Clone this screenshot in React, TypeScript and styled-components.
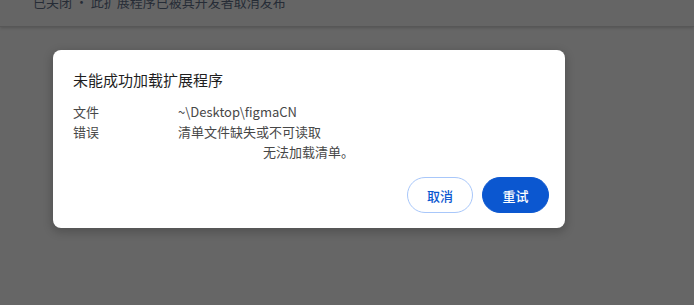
import React from "react";
import styled, { createGlobalStyle } from "styled-components";

const Global = createGlobalStyle`
  html, body { margin: 0; padding: 0; background: #666666; }
  body { font-family: "Noto Sans CJK SC", "Noto Sans", sans-serif; }
  * { box-sizing: border-box; }
`;

const Page = styled.div`
  width: 694px;
  height: 305px;
  background: #666666;
  overflow: hidden;
  display: flex;
  flex-direction: column;
`;

const TopBar = styled.div`
  height: 27px;
  flex: none;
  background: #656565;
  border-bottom: 1px solid #575757;
  box-shadow: 0 1px 3px rgba(0, 0, 0, 0.18);
  overflow: hidden;
  padding-left: 33px;
`;

const TopText = styled.div`
  margin-top: -8px;
  font-size: 13px;
  line-height: 20px;
  color: #262c36;
  white-space: nowrap;
`;

const Dialog = styled.div`
  margin: 23px 0 0 53px;
  width: 512px;
  height: 178px;
  background: #ffffff;
  border-radius: 8px;
  box-shadow: 0 3px 8px 2px rgba(0, 0, 0, 0.18);
  padding: 20px 16px 15px 20px;
  display: flex;
  flex-direction: column;
`;

const Title = styled.div`
  font-size: 15px;
  line-height: 20px;
  color: #1f1f1f;
`;

const Details = styled.div`
  margin-top: 12px;
  display: grid;
  grid-template-columns: 105px 1fr;
  font-size: 13px;
  line-height: 20px;
  color: #474747;
`;

const Label = styled.div``;
const Value = styled.div``;

const Extra = styled.div`
  grid-column: 2;
  padding-left: 85px;
`;

const Actions = styled.div`
  margin-top: auto;
  display: flex;
  justify-content: flex-end;
  gap: 9px;
`;

const Button = styled.button<{ $primary?: boolean }>`
  height: 36px;
  width: ${(p) => (p.$primary ? "67px" : "66px")};
  border-radius: 18px;
  font-family: "Noto Sans CJK SC", "Noto Sans", sans-serif;
  font-size: 13px;
  font-weight: 500;
  cursor: pointer;
  border: 1px solid ${(p) => (p.$primary ? "#0b57d0" : "#a8c7fa")};
  background: ${(p) => (p.$primary ? "#0b57d0" : "#ffffff")};
  color: ${(p) => (p.$primary ? "#ffffff" : "#0b57d0")};
  padding: 0;
`;

export default function App() {
  return (
    <Page>
      <Global />
      <TopBar>
        <TopText>已关闭 • 此扩展程序已被其开发者取消发布</TopText>
      </TopBar>
      <Dialog>
        <Title>未能成功加载扩展程序</Title>
        <Details>
          <Label>文件</Label>
          <Value>~\Desktop\figmaCN</Value>
          <Label>错误</Label>
          <Value>清单文件缺失或不可读取</Value>
          <Extra>无法加载清单。</Extra>
        </Details>
        <Actions>
          <Button>取消</Button>
          <Button $primary>重试</Button>
        </Actions>
      </Dialog>
    </Page>
  );
}
